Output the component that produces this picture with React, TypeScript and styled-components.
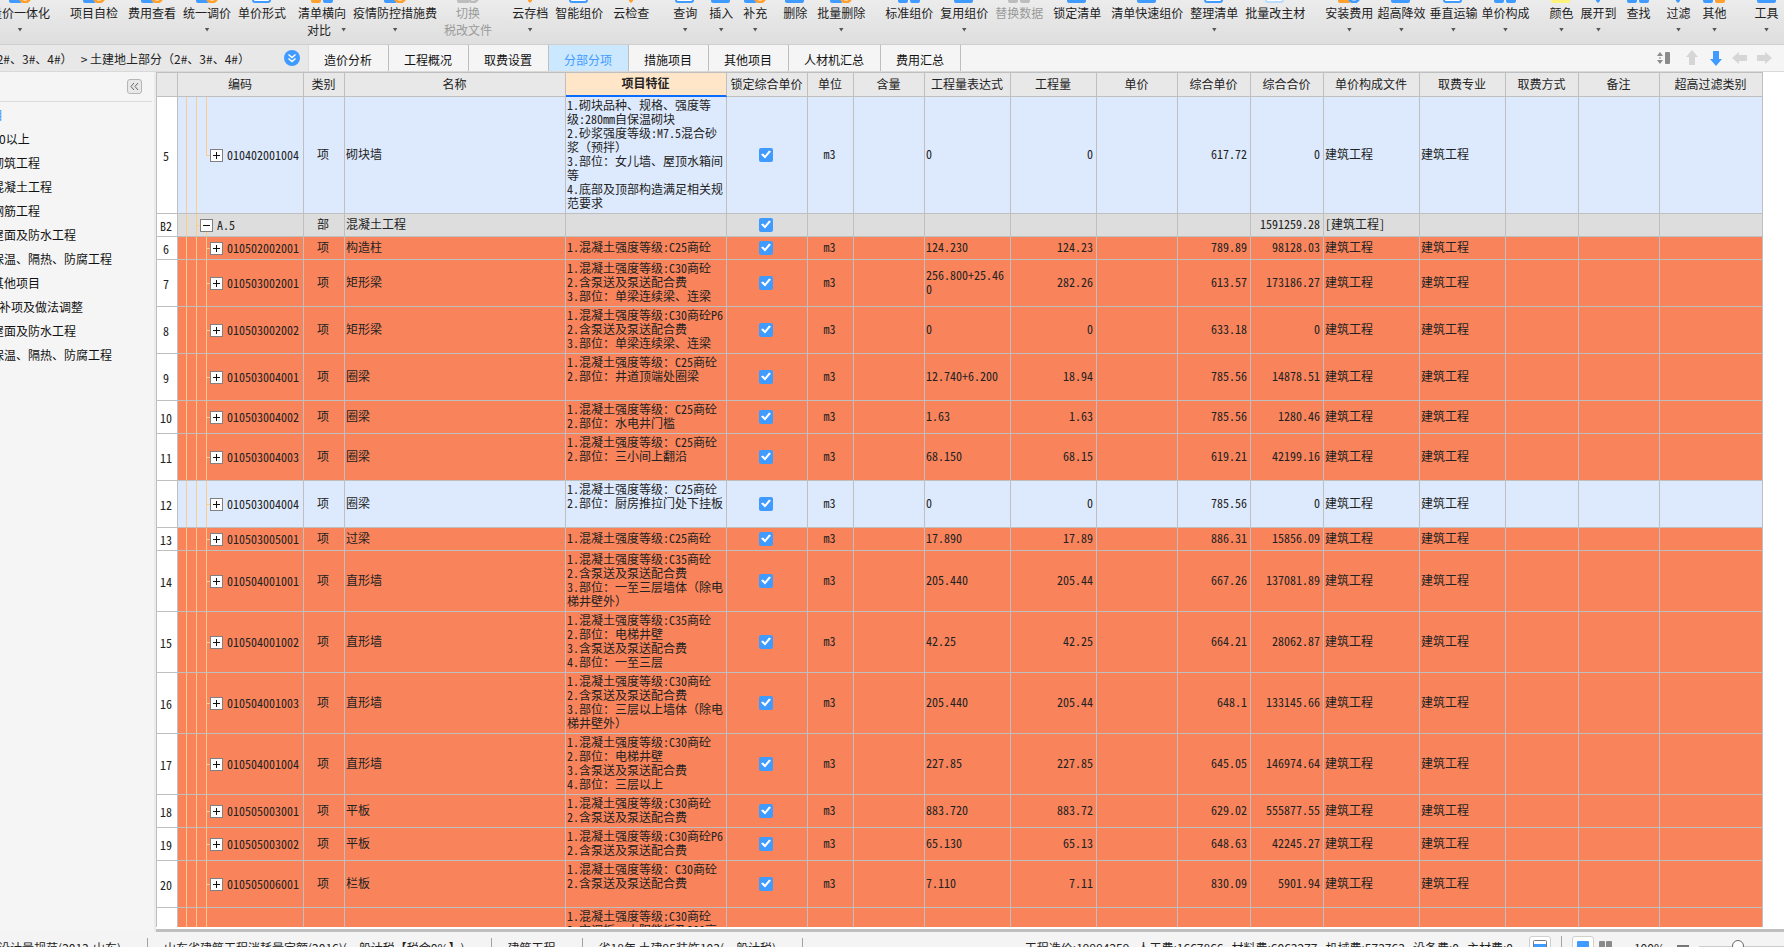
import React from "react";
import styled, { createGlobalStyle, css } from "styled-components";

const LINE = "#bfbfbf";
const BLUE = "#3f9bff";
const ORANGE = "#ff9f2e";
const GREY = "#bdbdbd";
const UI_FONT = `"Noto Sans CJK SC", "Noto Sans", sans-serif`;
const GRID_FONT = `"Noto Sans Mono CJK SC", "Noto Sans CJK SC", sans-serif`;

const GlobalStyle = createGlobalStyle`
  * { box-sizing: border-box; }
  body { margin: 0; background: #fff; }
  button, input { font: inherit; color: inherit; margin: 0; }
  button { border: 0; background: none; padding: 0; cursor: pointer; }
`;

const Shell = styled.div`
  display: flex;
  flex-direction: column;
  height: 100vh;
  overflow: hidden;
  font: 12px/17px ${UI_FONT};
  text-spacing-trim: space-all;
  color: #222;
`;

/* ---------- toolbar ---------- */

const Toolbar = styled.header`
  display: flex;
  align-items: flex-start;
  flex: none;
  height: 45px;
  overflow: hidden;
  background: linear-gradient(#ececec, #dedede);
  border-bottom: 1px solid #cfcfcf;
`;

const ToolScroll = styled.div`
  display: flex;
  align-items: flex-start;
  margin-left: -10px;
`;

const ToolButton = styled.button<{ $gap: number; $muted?: boolean }>`
  display: flex;
  flex-direction: column;
  align-items: center;
  flex: none;
  margin-left: ${(p) => p.$gap}px;
  white-space: nowrap;
  ${(p) => p.$muted && css`color: #9a9a9a;`}

  & > svg {
    margin: -21px 0 1px;
  }
`;

const SecondLine = styled.span`
  display: flex;
  align-items: center;
  justify-content: center;
  height: 17px;
`;

const SplitLine = styled(SecondLine)`
  align-self: flex-end;
  gap: 10px;
`;

const Caret = styled.span`
  width: 5px;
  height: 4px;
  background: #555;
  clip-path: polygon(0 0, 100% 0, 50% 100%);
`;

type IconKind = "pair" | "doc" | "badge" | "single" | "cloud";

function ToolIcon({ kind, a, b }: { kind: IconKind; a: string; b: string }) {
  return (
    <svg width="24" height="24" viewBox="0 0 24 24" aria-hidden="true">
      {kind === "pair" && (
        <>
          <rect x="1" y="12" width="10" height="12" rx="2" fill={a} />
          <rect x="13" y="12" width="10" height="12" rx="2" fill={b} />
        </>
      )}
      {kind === "doc" && (
        <>
          <rect x="3" y="3" width="17" height="20" rx="2" fill="#fff" stroke={a} strokeWidth="2" />
          <path d="M15 20 L22 12" stroke={b} strokeWidth="2" />
        </>
      )}
      {kind === "badge" && (
        <>
          <rect x="1" y="3" width="13" height="21" rx="2" fill={a} />
          <circle cx="17" cy="18" r="5" fill="#fff" stroke={b} strokeWidth="3" />
        </>
      )}
      {kind === "single" && <rect x="2" y="4" width="19" height="20" rx="2" fill={a} />}
      {kind === "cloud" && (
        <path d="M8 4 h8 l-2 18 -2 2 -2 -2z" fill={a} />
      )}
    </svg>
  );
}

interface Tool {
  t: string;
  gap: number;
  caret?: boolean;
  sub?: string;
  muted?: boolean;
  k?: IconKind;
  a?: string;
  b?: string;
}

const TOOLS: Tool[] = [
  { t: "量价一体化", gap: 0, caret: true, k: "badge", b: ORANGE },
  { t: "项目自检", gap: 20, k: "badge", b: ORANGE },
  { t: "费用查看", gap: 10, k: "badge", b: ORANGE },
  { t: "统一调价", gap: 7, caret: true, k: "badge", b: ORANGE },
  { t: "单价形式", gap: 7, k: "doc" },
  { t: "清单横向", gap: 12, caret: true, sub: "对比", k: "pair", a: ORANGE, b: BLUE },
  { t: "疫情防控措施费", gap: 7, caret: true, k: "badge", b: ORANGE },
  { t: "切换", gap: 7, sub: "税改文件", muted: true, k: "badge", a: GREY, b: GREY },
  { t: "云存档", gap: 20, caret: true, k: "cloud", a: ORANGE },
  { t: "智能组价", gap: 7, k: "doc", b: ORANGE },
  { t: "云检查", gap: 10, k: "cloud", a: ORANGE },
  { t: "查询", gap: 24, caret: true, k: "doc", b: ORANGE },
  { t: "插入", gap: 12, caret: true, k: "single" },
  { t: "补充", gap: 10, caret: true, k: "badge", b: ORANGE },
  { t: "删除", gap: 16, k: "single" },
  { t: "批量删除", gap: 10, caret: true, k: "badge", b: ORANGE },
  { t: "标准组价", gap: 20, k: "pair" },
  { t: "复用组价", gap: 7, caret: true, k: "single" },
  { t: "替换数据", gap: 7, muted: true, k: "pair", a: GREY, b: GREY },
  { t: "锁定清单", gap: 10, k: "single" },
  { t: "清单快速组价", gap: 10, k: "single" },
  { t: "整理清单", gap: 7, caret: true, k: "doc" },
  { t: "批量改主材", gap: 7, k: "doc", a: "#b9dcff" },
  { t: "安装费用", gap: 20, caret: true, k: "badge", a: ORANGE },
  { t: "超高降效", gap: 4, caret: true, k: "single" },
  { t: "垂直运输", gap: 4, caret: true, k: "doc", a: BLUE, b: ORANGE },
  { t: "单价构成", gap: 4, caret: true, k: "pair" },
  { t: "颜色", gap: 20, caret: true, k: "single", a: "#fff37a" },
  { t: "展开到", gap: 7, caret: true, k: "cloud" },
  { t: "查找", gap: 10, k: "pair" },
  { t: "过滤", gap: 16, caret: true, k: "cloud" },
  { t: "其他", gap: 12, caret: true, k: "pair", b: ORANGE },
  { t: "工具", gap: 28, caret: true, k: "single" },
];

/* ---------- path and tabs ---------- */

const NavBar = styled.div`
  display: flex;
  flex: none;
  height: 27px;
  background: #f5f5f5;
  border-bottom: 1px solid #d9d9d9;
`;

const PathBox = styled.div`
  display: flex;
  align-items: center;
  justify-content: flex-end;
  gap: 34px;
  width: 309px;
  padding-right: 8px;
  overflow: hidden;
  background: #e8e8e8;
  border-right: 1px solid #dcdcdc;
  white-space: pre;
`;

const RoundButton = styled.button`
  display: grid;
  place-items: center;
  flex: none;
  width: 16px;
  height: 16px;
  border-radius: 50%;
  background: ${BLUE};
`;

const Tabs = styled.nav`
  display: flex;
  flex: 1;
`;

const Tab = styled.button<{ $active?: boolean }>`
  padding: 2px 16px 0 15px;
  border-right: 1px solid ${LINE};
  color: #111;
  ${(p) =>
    p.$active &&
    css`
      background: #cce8ff;
      color: ${BLUE};
    `}
`;

const MoveButtons = styled.div`
  display: flex;
  align-items: center;
  gap: 8px;
  padding-right: 12px;

  button { display: grid; width: 16px; height: 16px; }
  button:first-child { margin-right: 4px; }
`;

const TABS = ["造价分析", "工程概况", "取费设置", "分部分项", "措施项目", "其他项目", "人材机汇总", "费用汇总"];

function Arrow({ turn, color }: { turn: number; color: string }) {
  return (
    <svg width="16" height="16" viewBox="0 0 16 16" aria-hidden="true">
      <path d="M8 0 L14 7 H11 V15 H5 V7 H2 Z" fill={color} transform={`rotate(${turn} 8 8)`} />
    </svg>
  );
}

/* ---------- side tree ---------- */

const Body = styled.div`
  display: flex;
  flex: 1;
  min-height: 0;
`;

const Side = styled.aside`
  flex: none;
  width: 156px;
  overflow: hidden;
  background: #f5f5f5;
  border-right: 2px solid #ebebeb;
`;

const SideHead = styled.div`
  display: flex;
  justify-content: flex-end;
  height: 30px;
  margin-right: 2px;
  padding: 7px 10px 0 0;
  border-bottom: 1px solid #dcdcdc;
`;

const CollapseButton = styled.button`
  display: grid;
  place-items: center;
  width: 15px;
  height: 15px;
  border: 1px solid #b5b5b5;
  border-radius: 3px;
  background: #e8e8e8;
`;

/* The tree is scrolled sideways, so its left part lies outside the panel. */
const TreeList = styled.ul`
  list-style: none;
  margin: 1px 0 0 -45px;
  padding: 0;
`;

const INDENT = [0, 37, 44];

const TreeItem = styled.li<{ $level: number }>`
  padding-left: ${(p) => INDENT[p.$level]}px;
  line-height: 24px;
  white-space: nowrap;
  color: ${(p) => (p.$level === 0 ? BLUE : "#111")};
`;

const TREE: [number, string][] = [
  [0, "整个项目"],
  [2, "0以上"],
  [1, "砌筑工程"],
  [1, "混凝土工程"],
  [1, "钢筋工程"],
  [1, "屋面及防水工程"],
  [1, "保温、隔热、防腐工程"],
  [1, "其他项目"],
  [2, "补项及做法调整"],
  [1, "屋面及防水工程"],
  [1, "保温、隔热、防腐工程"],
];

/* ---------- grid ---------- */

const GridArea = styled.main`
  flex: 1;
  min-width: 0;
  padding-right: 21px;
  border-bottom: 3px solid ${LINE};
  background: #fff;
`;

const GridClip = styled.div`
  height: calc(100% - 2px);
  overflow: hidden;
`;

const Grid = styled.table`
  width: 100%;
  table-layout: fixed;
  border-collapse: separate;
  border-spacing: 0;
  border-left: 1px solid ${LINE};
  font: 12px/14px ${GRID_FONT};
`;

const Th = styled.th<{ $active?: boolean }>`
  height: 25px;
  padding: 0 1px 2px 0;
  border: solid ${LINE};
  border-width: 1px 1px 1px 0;
  background: #e8e8e8;
  font-weight: 400;
  white-space: nowrap;
  ${(p) =>
    p.$active &&
    css`
      background: #ffe6c8;
      border-bottom: 2px solid #0a6cff;
      font-weight: 700;
    `}
`;

type Tone = "blue" | "grey" | "orange";
const TONES: Record<Tone, string> = { blue: "#ddeafe", grey: "#dddddd", orange: "#f9845b" };

const Row = styled.tr<{ $tone: Tone; $h: number }>`
  height: ${(p) => p.$h}px;
  background: ${(p) => TONES[p.$tone]};
`;

const Td = styled.td<{ $align?: "left" | "center" | "right" }>`
  padding: 0 3px 3px 1px;
  border: solid ${LINE};
  border-width: 0 1px 1px 0;
  text-align: ${(p) => p.$align || "left"};
  vertical-align: middle;
  word-break: break-all;
`;

const FeatureTd = styled(Td)`
  padding: 1px 0 3px 1px;
  white-space: pre;
  overflow: hidden;
`;

const NumberTd = styled(Td)`
  padding: 1px 2px 0 0;
  background: #fff;
  text-align: center;
`;

const guide = "linear-gradient(#fc8, #fc8)";

const CodeTd = styled(Td)<{ $group?: boolean; $end?: boolean }>`
  padding: 0 0 0 ${(p) => (p.$group ? 22 : 32)}px;
  background-repeat: no-repeat;
  background-image: ${guide}, ${guide}, ${guide}, ${guide};
  background-position: 8px 0, 18px 0, 28px ${(p) => (p.$group ? "100%" : "0")},
    ${(p) => (p.$group ? 18 : 28)}px 50%;
  background-size: 1px 100%, 1px 100%, 1px ${(p) => (p.$group ? "30%" : p.$end ? "50%" : "100%")}, 5px 1px;
`;

const RestTd = styled(CodeTd)`
  background-size: 1px 100%, 1px 100%, 1px 100%, 0 0;
`;

const CodeLine = styled.div`
  display: flex;
  align-items: center;
  gap: 4px;
`;

const Expander = styled.button`
  display: grid;
  place-items: center;
  flex: none;
  width: 13px;
  height: 13px;
  border: 1px solid #808080;
  background: #fff;
`;

const Check = styled.input`
  display: block;
  appearance: none;
  width: 14px;
  height: 14px;
  margin: 2px auto 0;
  border-radius: 2px;
  background: ${BLUE};

  &:checked::before {
    content: "";
    display: block;
    width: 14px;
    height: 14px;
    background: #fff;
    clip-path: polygon(2px 7px, 4px 6px, 6px 8px, 10px 3px, 12px 4px, 6px 11px);
  }
`;

const COLUMNS: { name: string; w?: number }[] = [
  { name: "", w: 21 },
  { name: "编码", w: 126 },
  { name: "类别", w: 41 },
  { name: "名称" },
  { name: "项目特征", w: 161 },
  { name: "锁定综合单价", w: 81 },
  { name: "单位", w: 46 },
  { name: "含量", w: 71 },
  { name: "工程量表达式", w: 86 },
  { name: "工程量", w: 86 },
  { name: "单价", w: 81 },
  { name: "综合单价", w: 73 },
  { name: "综合合价", w: 73 },
  { name: "单价构成文件", w: 96 },
  { name: "取费专业", w: 86 },
  { name: "取费方式", w: 73 },
  { name: "备注", w: 81 },
  { name: "超高过滤类别", w: 103 },
];

interface Item {
  no: string;
  h: number;
  tone: Tone;
  code: string;
  name: string;
  feature: string;
  expr: string;
  qty: string;
  price: string;
  total: string;
  end?: boolean;
}

const item = (
  no: string, h: number, tone: Tone, code: string, name: string, feature: string,
  expr: string, qty: string, price: string, total: string, end = false,
): Item => ({ no, h, tone, code, name, feature, expr, qty, price, total, end });

const ITEMS: Item[] = [
  item("5", 117, "blue", "010402001004", "砌块墙",
    "1.砌块品种、规格、强度等\n级:280mm自保温砌块\n2.砂浆强度等级:M7.5混合砂\n浆（预拌）\n3.部位：女儿墙、屋顶水箱间\n等\n4.底部及顶部构造满足相关规\n范要求",
    "0", "0", "617.72", "0", true),
  item("B2", 23, "grey", "A.5", "混凝土工程", "", "", "", "", "1591259.28"),
  item("6", 23, "orange", "010502002001", "构造柱", "1.混凝土强度等级:C25商砼", "124.230", "124.23", "789.89", "98128.03"),
  item("7", 47, "orange", "010503002001", "矩形梁",
    "1.混凝土强度等级:C30商砼\n2.含泵送及泵送配合费\n3.部位：单梁连续梁、连梁", "256.800+25.460", "282.26", "613.57", "173186.27"),
  item("8", 47, "orange", "010503002002", "矩形梁",
    "1.混凝土强度等级:C30商砼P6\n2.含泵送及泵送配合费\n3.部位：单梁连续梁、连梁", "0", "0", "633.18", "0"),
  item("9", 47, "orange", "010503004001", "圈梁",
    "1.混凝土强度等级：C25商砼\n2.部位：井道顶端处圈梁\n\n", "12.740+6.200", "18.94", "785.56", "14878.51"),
  item("10", 33, "orange", "010503004002", "圈梁",
    "1.混凝土强度等级：C25商砼\n2.部位：水电井门槛", "1.63", "1.63", "785.56", "1280.46"),
  item("11", 47, "orange", "010503004003", "圈梁",
    "1.混凝土强度等级：C25商砼\n2.部位：三小间上翻沿\n\n", "68.150", "68.15", "619.21", "42199.16"),
  item("12", 47, "blue", "010503004004", "圈梁",
    "1.混凝土强度等级：C25商砼\n2.部位：厨房推拉门处下挂板\n\n", "0", "0", "785.56", "0"),
  item("13", 23, "orange", "010503005001", "过梁", "1.混凝土强度等级:C25商砼", "17.890", "17.89", "886.31", "15856.09"),
  item("14", 61, "orange", "010504001001", "直形墙",
    "1.混凝土强度等级:C35商砼\n2.含泵送及泵送配合费\n3.部位：一至三层墙体（除电\n梯井壁外）", "205.440", "205.44", "667.26", "137081.89"),
  item("15", 61, "orange", "010504001002", "直形墙",
    "1.混凝土强度等级:C35商砼\n2.部位：电梯井壁\n3.含泵送及泵送配合费\n4.部位：一至三层", "42.25", "42.25", "664.21", "28062.87"),
  item("16", 61, "orange", "010504001003", "直形墙",
    "1.混凝土强度等级:C30商砼\n2.含泵送及泵送配合费\n3.部位：三层以上墙体（除电\n梯井壁外）", "205.440", "205.44", "648.1", "133145.66"),
  item("17", 61, "orange", "010504001004", "直形墙",
    "1.混凝土强度等级:C30商砼\n2.部位：电梯井壁\n3.含泵送及泵送配合费\n4.部位：三层以上", "227.85", "227.85", "645.05", "146974.64"),
  item("18", 33, "orange", "010505003001", "平板",
    "1.混凝土强度等级:C30商砼\n2.含泵送及泵送配合费", "883.720", "883.72", "629.02", "555877.55"),
  item("19", 33, "orange", "010505003002", "平板",
    "1.混凝土强度等级:C30商砼P6\n2.含泵送及泵送配合费", "65.130", "65.13", "648.63", "42245.27"),
  item("20", 47, "orange", "010505006001", "栏板",
    "1.混凝土强度等级：C30商砼\n2.含泵送及泵送配合费\n\n", "7.110", "7.11", "830.09", "5901.94"),
];

function ItemRow({ r }: { r: Item }) {
  const group = r.tone === "grey";
  return (
    <Row $tone={r.tone} $h={r.h}>
      <NumberTd>{r.no}</NumberTd>
      <CodeTd $group={group} $end={r.end}>
        <CodeLine>
          <Expander aria-label={group ? "折叠" : "展开"}>
            <svg width="9" height="9" viewBox="0 0 9 9" aria-hidden="true">
              <path d={group ? "M1 4.5H8" : "M1 4.5H8M4.5 1V8"} stroke="#111" />
            </svg>
          </Expander>
          {r.code}
        </CodeLine>
      </CodeTd>
      <Td $align="center">{group ? "部" : "项"}</Td>
      <Td>{r.name}</Td>
      <FeatureTd>{r.feature}</FeatureTd>
      <Td>
        <Check type="checkbox" defaultChecked aria-label="锁定综合单价" />
      </Td>
      <Td $align="center">{group ? "" : "m3"}</Td>
      <Td />
      <Td>{r.expr}</Td>
      <Td $align="right">{r.qty}</Td>
      <Td />
      <Td $align="right">{r.price}</Td>
      <Td $align="right">{r.total}</Td>
      <Td>{group ? "[建筑工程]" : "建筑工程"}</Td>
      <Td>{group ? "" : "建筑工程"}</Td>
      <Td />
      <Td />
      <Td />
    </Row>
  );
}

/* ---------- status bar ---------- */

const StatusBar = styled.footer`
  display: flex;
  flex: none;
  height: 15px;
  overflow: hidden;
  background: #f4f4f4;
  white-space: pre;
`;

const StatusCell = styled.span<{ $first?: boolean }>`
  height: 32px;
  margin-top: 6px;
  padding: 0 26px 0 16px;
  border-right: 1px solid #a0a4aa;
  line-height: 20px;
  ${(p) =>
    p.$first &&
    css`
      display: flex;
      justify-content: flex-end;
      width: 148px;
      overflow: hidden;
    `}
`;

const StatusTools = styled.div`
  display: flex;
  align-items: flex-start;
  margin: 4px 0 0 auto;
  line-height: 24px;
`;

const Totals = styled.span`
  margin-right: 16px;
`;

const ViewButton = styled.button<{ $framed?: boolean }>`
  display: grid;
  place-items: center;
  width: 22px;
  height: 22px;
  border-radius: 3px;
  ${(p) =>
    p.$framed &&
    css`
      border: 1px solid #d0d0d0;
      background: #fff;
    `}
`;

const Rule = styled.span`
  width: 1px;
  height: 22px;
  margin: 0 10px;
  background: #a0a4aa;
`;

const Percent = styled.span`
  margin: 0 12px 0 18px;
`;

const Minus = styled.button`
  width: 12px;
  height: 2px;
  margin: 9px 10px 0 0;
  background: #777;
`;

const Slider = styled.input`
  appearance: none;
  width: 85px;
  height: 20px;
  background: linear-gradient(#ccc, #ccc) 0 50% / 100% 1px no-repeat;

  &::-webkit-slider-thumb {
    appearance: none;
    width: 12px;
    height: 12px;
    border: 1px solid #666;
    border-radius: 50%;
    background: #fff;
  }
`;

export default function App() {
  return (
    <Shell>
      <GlobalStyle />
      <Toolbar>
        <ToolScroll>
          {TOOLS.map((t) => (
            <ToolButton key={t.t} $gap={t.gap} $muted={t.muted}>
              <ToolIcon kind={t.k || "single"} a={t.a || BLUE} b={t.b || BLUE} />
              <span>{t.t}</span>
              {t.sub && t.caret ? (
                <SplitLine>
                  {t.sub}
                  <Caret />
                </SplitLine>
              ) : (
                (t.sub || t.caret) && <SecondLine>{t.sub || <Caret />}</SecondLine>
              )}
            </ToolButton>
          ))}
        </ToolScroll>
      </Toolbar>

      <NavBar>
        <PathBox>
          <span>（2#、3#、4#）   &gt; 土建地上部分（2#、3#、4#）</span>
          <RoundButton aria-label="展开路径">
            <svg width="10" height="10" viewBox="0 0 10 10" fill="none" stroke="#fff" strokeWidth="1.5" aria-hidden="true">
              <path d="M1.5 1.5 L5 4.5 L8.5 1.5 M1.5 5.5 L5 8.5 L8.5 5.5" />
            </svg>
          </RoundButton>
        </PathBox>
        <Tabs>
          {TABS.map((t) => (
            <Tab key={t} $active={t === "分部分项"}>{t}</Tab>
          ))}
        </Tabs>
        <MoveButtons>
          <button aria-label="行高">
            <svg width="16" height="16" viewBox="0 0 16 16" fill="#8a8a8a" aria-hidden="true">
              <path d="M1 6 L4 2 L7 6Z M1 10 L4 14 L7 10Z" />
              <rect x="3" y="7.5" width="2" height="1" />
              <rect x="9" y="2" width="5" height="12" rx="1" />
            </svg>
          </button>
          <button aria-label="上移"><Arrow turn={0} color="#d6d6d6" /></button>
          <button aria-label="下移"><Arrow turn={180} color={BLUE} /></button>
          <button aria-label="左移"><Arrow turn={270} color="#d6d6d6" /></button>
          <button aria-label="右移"><Arrow turn={90} color="#d6d6d6" /></button>
        </MoveButtons>
      </NavBar>

      <Body>
        <Side>
          <SideHead>
            <CollapseButton aria-label="收起">
              <svg width="9" height="9" viewBox="0 0 9 9" fill="none" stroke="#666" aria-hidden="true">
                <path d="M4 1 L1 4.5 L4 8 M8 1 L5 4.5 L8 8" />
              </svg>
            </CollapseButton>
          </SideHead>
          <TreeList>
            {TREE.map(([level, text], i) => (
              <TreeItem key={i} $level={level}>{text}</TreeItem>
            ))}
          </TreeList>
        </Side>

        <GridArea>
          <GridClip>
            <Grid>
              <colgroup>
                {COLUMNS.map((c, i) => (
                  <col key={i} width={c.w} />
                ))}
              </colgroup>
              <thead>
                <tr>
                  {COLUMNS.map((c, i) => (
                    <Th key={i} $active={c.name === "项目特征"}>{c.name}</Th>
                  ))}
                </tr>
              </thead>
              <tbody>
                {ITEMS.map((r) => (
                  <ItemRow key={r.no} r={r} />
                ))}
                <Row $tone="orange" $h={61}>
                  <NumberTd />
                  <RestTd />
                  <Td />
                  <Td />
                  <FeatureTd>{"1.混凝土强度等级:C30商砼\n2.空调板、太阳能板及300高\n\n\n\n"}</FeatureTd>
                  {COLUMNS.slice(5).map((c) => (
                    <Td key={c.name} />
                  ))}
                </Row>
              </tbody>
            </Grid>
          </GridClip>
        </GridArea>
      </Body>

      <StatusBar>
        <StatusCell $first>程量设计量规范(2013-山东)</StatusCell>
        <StatusCell>山东省建筑工程消耗量定额(2016)(一般计税【税金0%】)</StatusCell>
        <StatusCell>建筑工程</StatusCell>
        <StatusCell>省18年 土建95装饰103(一般计税)</StatusCell>
        <StatusTools>
          <Totals>工程造价:19994259   人工费:1667866   材料费:6063277   机械费:573763   设备费:0   主材费:0</Totals>
          <ViewButton $framed aria-label="分栏视图">
            <svg width="14" height="14" viewBox="0 0 14 14" aria-hidden="true">
              <rect x="0.5" y="0.5" width="13" height="12" rx="1" fill="#fff" stroke="#777" />
              <rect x="1" y="4" width="12" height="8" fill={BLUE} />
            </svg>
          </ViewButton>
          <Rule />
          <ViewButton $framed aria-label="单页视图">
            <svg width="14" height="14" viewBox="0 0 14 14" aria-hidden="true">
              <rect x="1" y="1" width="12" height="12" rx="1" fill={BLUE} />
            </svg>
          </ViewButton>
          <ViewButton aria-label="双页视图">
            <svg width="14" height="14" viewBox="0 0 14 14" fill="#8a8a8a" aria-hidden="true">
              <rect x="1" y="1" width="6" height="12" rx="1" />
              <rect x="8" y="1" width="6" height="12" rx="1" />
            </svg>
          </ViewButton>
          <Percent>100%</Percent>
          <Minus aria-label="缩小" />
          <Slider type="range" aria-label="缩放" min={0} max={100} defaultValue={45} />
        </StatusTools>
      </StatusBar>
    </Shell>
  );
}
